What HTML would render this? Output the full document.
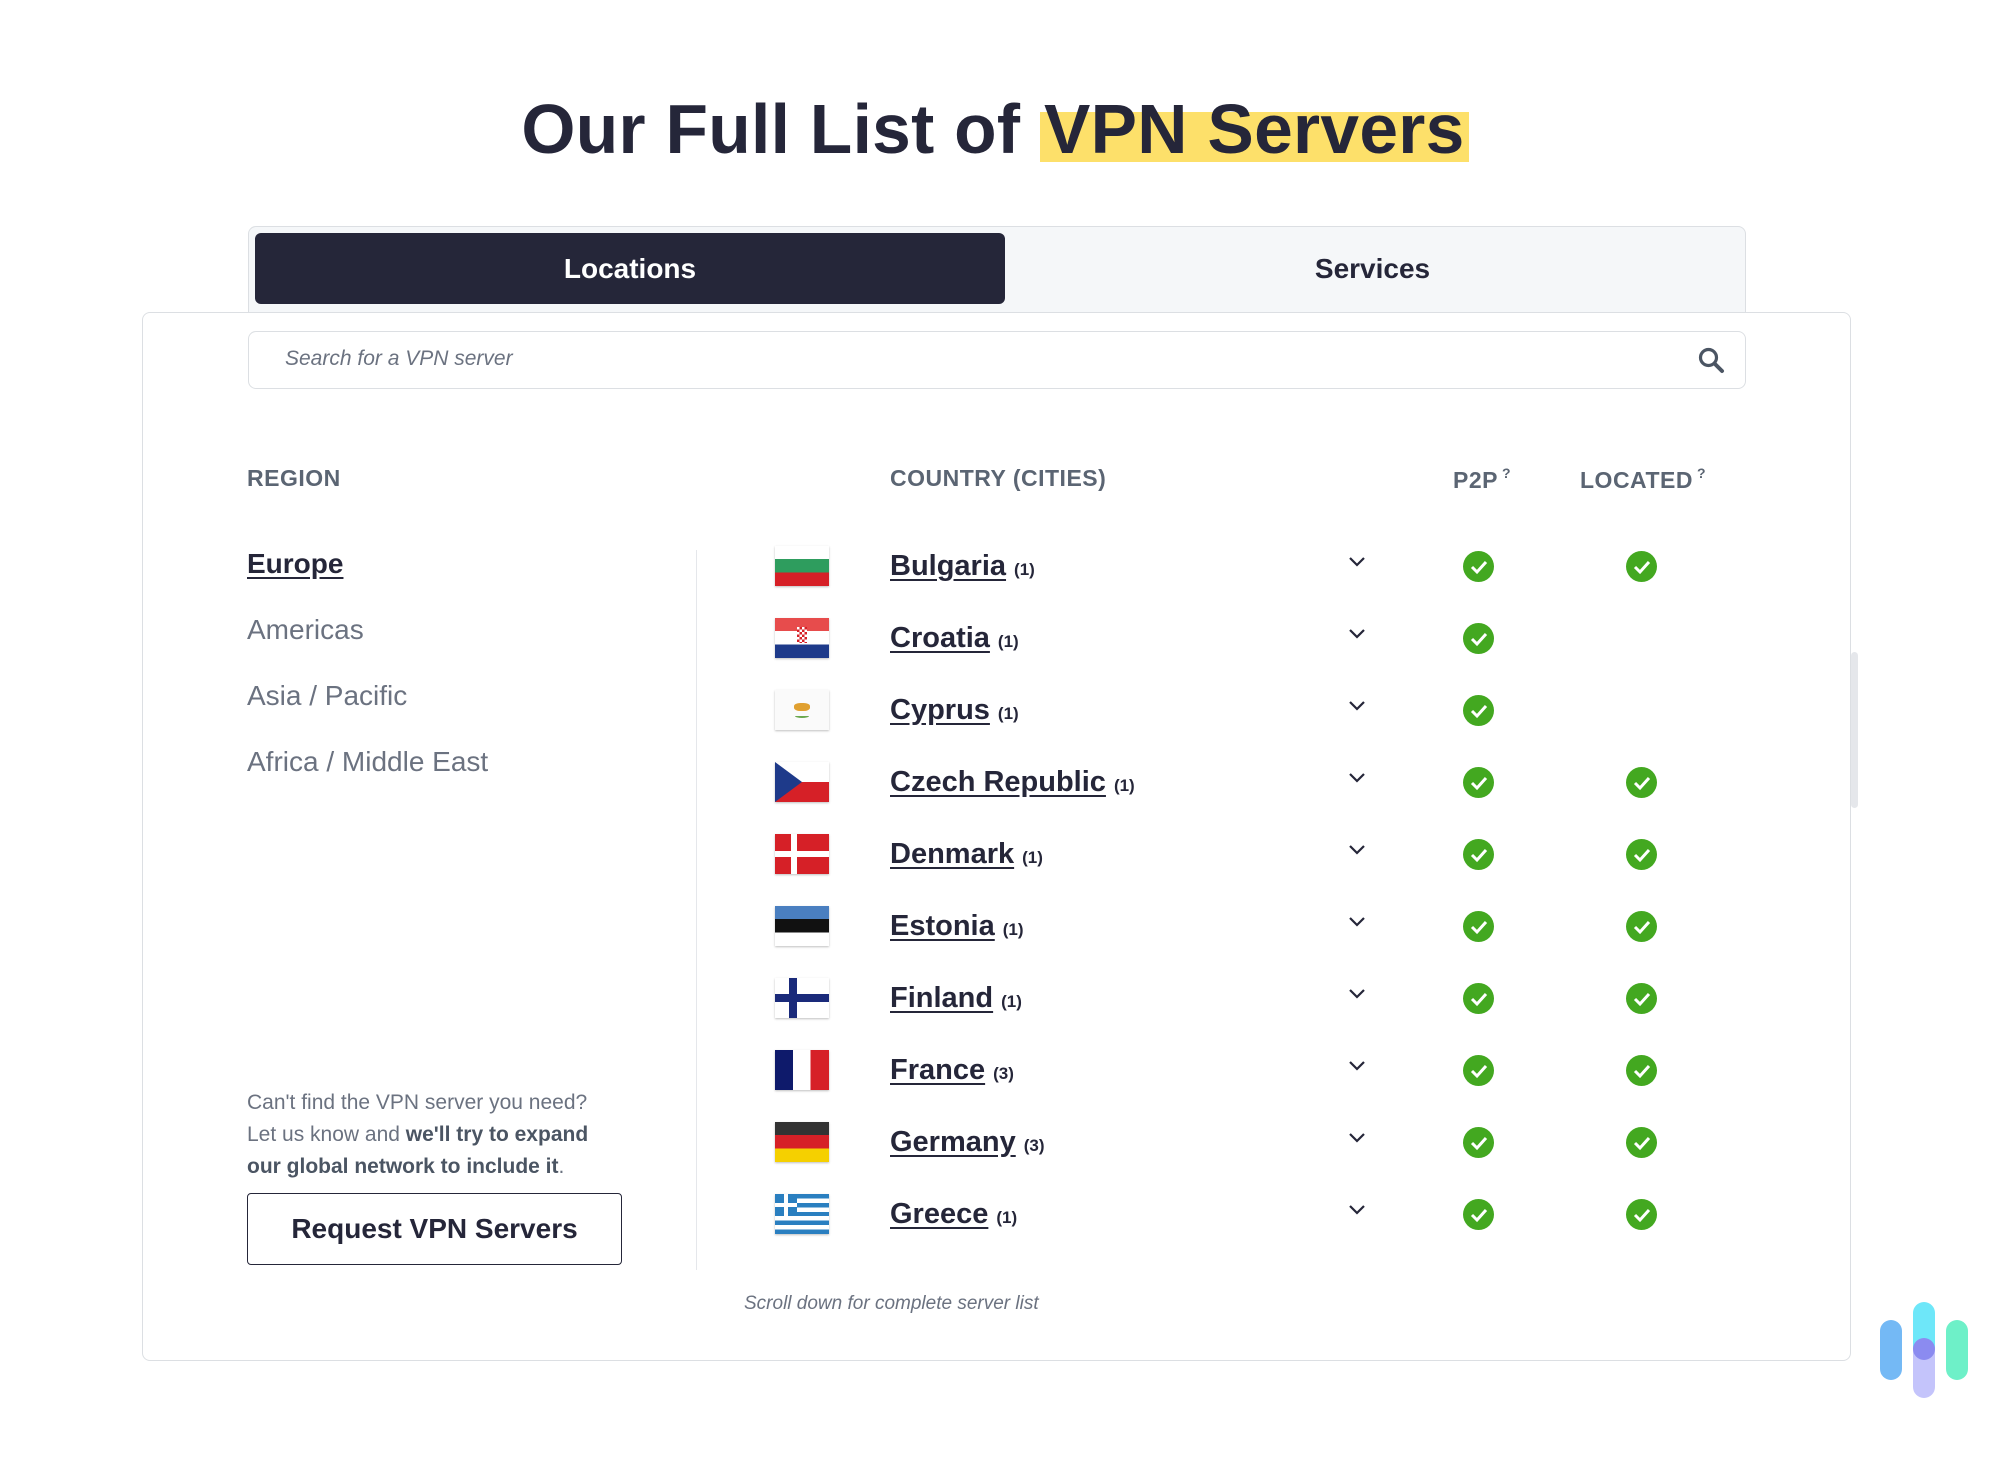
<!DOCTYPE html>
<html><head><meta charset="utf-8"><style>
*{margin:0;padding:0;box-sizing:border-box}
body{width:1995px;height:1465px;background:#fff;font-family:"Liberation Sans",sans-serif;color:#252639;position:relative;overflow:hidden}
.abs{position:absolute}
h1{position:absolute;left:0;width:1990px;top:89px;text-align:center;font-size:69.5px;font-weight:bold;color:#252639;letter-spacing:0.3px}
h1 span{background:linear-gradient(to bottom,transparent 28%,#fde06a 28%,#fde06a 92%,transparent 92%);padding:0 4px}
.tabs{left:248px;top:226px;width:1498px;height:90px;background:#f5f7f9;border:1px solid #dcdfe3;border-radius:8px 8px 0 0}
.loc{left:255px;top:233px;width:750px;height:71px;background:#252639;border-radius:6px;color:#fff;font-size:28px;font-weight:bold;text-align:center;line-height:71px}
.svc{left:1005px;top:233px;width:735px;height:71px;color:#252639;font-size:28px;font-weight:bold;text-align:center;line-height:71px}
.card{left:142px;top:312px;width:1709px;height:1049px;background:#fff;border:1px solid #dcdfe3;border-radius:8px}
.search{left:248px;top:331px;width:1498px;height:58px;border:1px solid #dcdfe3;border-radius:8px;background:#fff}
.ph{left:285px;top:347px;font-size:21px;font-style:italic;color:#6b7280}
.hd{top:465px;font-size:23px;font-weight:bold;color:#5b6573;letter-spacing:0.5px}
.hd sup{font-size:14px;vertical-align:10px;margin-left:4px}
.rg{left:247px;font-size:28px;color:#6b7280}
.row{position:absolute;left:0;width:1995px;height:40px}
.flag{position:absolute;left:775px;width:54px;height:40px;box-shadow:0 1px 2px rgba(0,0,0,.25);overflow:hidden}
.name{position:absolute;left:890px;top:4px;font-size:29px;font-weight:bold;color:#252639;text-decoration:underline;text-underline-offset:4px;white-space:nowrap}
.name small{font-size:17px;text-decoration:none;display:inline-block;margin-left:8px;font-weight:bold}
.chev{position:absolute;left:1348px;top:10px}
.chk{position:absolute;top:5px;width:31px;height:31px;border-radius:50%;background:#43a820}
.chk svg{position:absolute;left:0;top:0}
</style></head><body>
<h1>Our Full List of <span>VPN Servers</span></h1>
<div class="abs tabs"></div>
<div class="abs loc">Locations</div>
<div class="abs svc">Services</div>
<div class="abs card"></div>
<div class="abs search"></div>
<div class="abs ph">Search for a VPN server</div>
<svg class="abs" style="left:1697px;top:346px" width="28" height="28" viewBox="0 0 28 28"><circle cx="11.5" cy="11.5" r="8" fill="none" stroke="#4b5563" stroke-width="3.2"/><line x1="17.5" y1="17.5" x2="25" y2="25" stroke="#4b5563" stroke-width="4" stroke-linecap="round"/></svg>

<div class="abs hd" style="left:247px">REGION</div>
<div class="abs hd" style="left:890px">COUNTRY (CITIES)</div>
<div class="abs hd" style="left:1453px">P2P<sup>?</sup></div>
<div class="abs hd" style="left:1580px">LOCATED<sup>?</sup></div>

<div class="abs rg" style="top:548px;color:#252639;font-weight:bold;text-decoration:underline;text-underline-offset:4px">Europe</div>
<div class="abs rg" style="top:614px">Americas</div>
<div class="abs rg" style="top:680px">Asia / Pacific</div>
<div class="abs rg" style="top:746px">Africa / Middle East</div>

<div class="abs" style="left:696px;top:550px;width:1px;height:720px;background:#e5e7eb"></div>

<div class="abs" style="left:247px;top:1087px;font-size:21px;line-height:32px;color:#6b7280">Can't find the VPN server you need?<br>Let us know and <b style="color:#4b5563">we'll try to expand</b><br><b style="color:#4b5563">our global network to include it</b>.</div>
<div class="abs" style="left:247px;top:1193px;width:375px;height:72px;border:1.5px solid #252639;border-radius:4px;font-size:28px;font-weight:bold;text-align:center;line-height:70px">Request VPN Servers</div>

<div class="abs" style="left:744px;top:1293px;font-size:19px;font-style:italic;color:#6b7280">Scroll down for complete server list</div>
<div class="abs" style="left:1851px;top:652px;width:7px;height:156px;border-radius:4px;background:#e5e7eb"></div>

<div class="row" style="top:546px">
<div class="flag" style="background:linear-gradient(#fff 0 33%,#2e9d5e 33% 66%,#d62027 66%)"></div>
<div class="name">Bulgaria<small>(1)</small></div>
<svg class="chev" width="18" height="12"><path d="M2 2l7 7 7-7" fill="none" stroke="#252639" stroke-width="2.2"/></svg>
<div class="chk" style="left:1470px"><svg width="31" height="31"><path d="M9 16l5 5 9-10" fill="none" stroke="#fff" stroke-width="3"/></svg></div>
<div class="chk" style="left:1634px"><svg width="31" height="31"><path d="M9 16l5 5 9-10" fill="none" stroke="#fff" stroke-width="3"/></svg></div>
</div>
<div class="row" style="top:618px">
<div class="flag" style="background:linear-gradient(#e74c4c 0 33%,#fff 33% 66%,#1e3a8a 66%)"><div style="position:absolute;left:22px;top:9px;width:10px;height:16px;background:repeating-conic-gradient(#d62027 0 25%,#fff 0 50%) 0 0/5px 5px"></div></div>
<div class="name">Croatia<small>(1)</small></div>
<svg class="chev" width="18" height="12"><path d="M2 2l7 7 7-7" fill="none" stroke="#252639" stroke-width="2.2"/></svg>
<div class="chk" style="left:1470px"><svg width="31" height="31"><path d="M9 16l5 5 9-10" fill="none" stroke="#fff" stroke-width="3"/></svg></div>
</div>
<div class="row" style="top:690px">
<div class="flag" style="background:#fafafa"><div style="position:absolute;left:19px;top:13px;width:16px;height:8px;background:#e0a030;border-radius:40%"></div><div style="position:absolute;left:20px;top:24px;width:14px;height:4px;border-bottom:2px solid #6aa84f;border-radius:50%"></div></div>
<div class="name">Cyprus<small>(1)</small></div>
<svg class="chev" width="18" height="12"><path d="M2 2l7 7 7-7" fill="none" stroke="#252639" stroke-width="2.2"/></svg>
<div class="chk" style="left:1470px"><svg width="31" height="31"><path d="M9 16l5 5 9-10" fill="none" stroke="#fff" stroke-width="3"/></svg></div>
</div>
<div class="row" style="top:762px">
<div class="flag"><svg width="54" height="40"><rect width="54" height="20" fill="#fff"/><rect y="20" width="54" height="20" fill="#d62027"/><path d="M0 0L27 20 0 40z" fill="#1e3a8a"/></svg></div>
<div class="name">Czech Republic<small>(1)</small></div>
<svg class="chev" width="18" height="12"><path d="M2 2l7 7 7-7" fill="none" stroke="#252639" stroke-width="2.2"/></svg>
<div class="chk" style="left:1470px"><svg width="31" height="31"><path d="M9 16l5 5 9-10" fill="none" stroke="#fff" stroke-width="3"/></svg></div>
<div class="chk" style="left:1634px"><svg width="31" height="31"><path d="M9 16l5 5 9-10" fill="none" stroke="#fff" stroke-width="3"/></svg></div>
</div>
<div class="row" style="top:834px">
<div class="flag"><svg width="54" height="40"><rect width="54" height="40" fill="#d62027"/><rect x="16" width="6" height="40" fill="#fff"/><rect y="17" width="54" height="6" fill="#fff"/></svg></div>
<div class="name">Denmark<small>(1)</small></div>
<svg class="chev" width="18" height="12"><path d="M2 2l7 7 7-7" fill="none" stroke="#252639" stroke-width="2.2"/></svg>
<div class="chk" style="left:1470px"><svg width="31" height="31"><path d="M9 16l5 5 9-10" fill="none" stroke="#fff" stroke-width="3"/></svg></div>
<div class="chk" style="left:1634px"><svg width="31" height="31"><path d="M9 16l5 5 9-10" fill="none" stroke="#fff" stroke-width="3"/></svg></div>
</div>
<div class="row" style="top:906px">
<div class="flag" style="background:linear-gradient(#4a7fc0 0 33%,#111 33% 66%,#fff 66%)"></div>
<div class="name">Estonia<small>(1)</small></div>
<svg class="chev" width="18" height="12"><path d="M2 2l7 7 7-7" fill="none" stroke="#252639" stroke-width="2.2"/></svg>
<div class="chk" style="left:1470px"><svg width="31" height="31"><path d="M9 16l5 5 9-10" fill="none" stroke="#fff" stroke-width="3"/></svg></div>
<div class="chk" style="left:1634px"><svg width="31" height="31"><path d="M9 16l5 5 9-10" fill="none" stroke="#fff" stroke-width="3"/></svg></div>
</div>
<div class="row" style="top:978px">
<div class="flag"><svg width="54" height="40"><rect width="54" height="40" fill="#fff"/><rect x="14" width="8" height="40" fill="#1a2a7a"/><rect y="16" width="54" height="8" fill="#1a2a7a"/></svg></div>
<div class="name">Finland<small>(1)</small></div>
<svg class="chev" width="18" height="12"><path d="M2 2l7 7 7-7" fill="none" stroke="#252639" stroke-width="2.2"/></svg>
<div class="chk" style="left:1470px"><svg width="31" height="31"><path d="M9 16l5 5 9-10" fill="none" stroke="#fff" stroke-width="3"/></svg></div>
<div class="chk" style="left:1634px"><svg width="31" height="31"><path d="M9 16l5 5 9-10" fill="none" stroke="#fff" stroke-width="3"/></svg></div>
</div>
<div class="row" style="top:1050px">
<div class="flag" style="background:linear-gradient(90deg,#0e1a6b 0 33%,#fff 33% 66%,#d62027 66%)"></div>
<div class="name">France<small>(3)</small></div>
<svg class="chev" width="18" height="12"><path d="M2 2l7 7 7-7" fill="none" stroke="#252639" stroke-width="2.2"/></svg>
<div class="chk" style="left:1470px"><svg width="31" height="31"><path d="M9 16l5 5 9-10" fill="none" stroke="#fff" stroke-width="3"/></svg></div>
<div class="chk" style="left:1634px"><svg width="31" height="31"><path d="M9 16l5 5 9-10" fill="none" stroke="#fff" stroke-width="3"/></svg></div>
</div>
<div class="row" style="top:1122px">
<div class="flag" style="background:linear-gradient(#333 0 33%,#d62027 33% 66%,#f5d000 66%)"></div>
<div class="name">Germany<small>(3)</small></div>
<svg class="chev" width="18" height="12"><path d="M2 2l7 7 7-7" fill="none" stroke="#252639" stroke-width="2.2"/></svg>
<div class="chk" style="left:1470px"><svg width="31" height="31"><path d="M9 16l5 5 9-10" fill="none" stroke="#fff" stroke-width="3"/></svg></div>
<div class="chk" style="left:1634px"><svg width="31" height="31"><path d="M9 16l5 5 9-10" fill="none" stroke="#fff" stroke-width="3"/></svg></div>
</div>
<div class="row" style="top:1194px">
<div class="flag" style="background:repeating-linear-gradient(#2a7fc0 0 4.45px,#fff 4.45px 8.9px)"><div style="position:absolute;left:0;top:0;width:22px;height:22px;background:#2a7fc0"></div><div style="position:absolute;left:9px;top:0;width:4px;height:22px;background:#fff"></div><div style="position:absolute;left:0;top:9px;width:22px;height:4px;background:#fff"></div></div>
<div class="name">Greece<small>(1)</small></div>
<svg class="chev" width="18" height="12"><path d="M2 2l7 7 7-7" fill="none" stroke="#252639" stroke-width="2.2"/></svg>
<div class="chk" style="left:1470px"><svg width="31" height="31"><path d="M9 16l5 5 9-10" fill="none" stroke="#fff" stroke-width="3"/></svg></div>
<div class="chk" style="left:1634px"><svg width="31" height="31"><path d="M9 16l5 5 9-10" fill="none" stroke="#fff" stroke-width="3"/></svg></div>
</div>
<style>.row .chk[style*="1470"]{left:1463px!important}.row .chk[style*="1634"]{left:1626px!important}</style>

<div class="abs" style="left:1880px;top:1320px;width:22px;height:60px;border-radius:11px;background:#74b9f5"></div>
<div class="abs" style="left:1913px;top:1302px;width:22px;height:60px;border-radius:11px;background:#6ee7f9"></div>
<div class="abs" style="left:1913px;top:1340px;width:22px;height:58px;border-radius:11px;background:#c4c4fb"></div>
<div class="abs" style="left:1913px;top:1338px;width:22px;height:22px;border-radius:11px;background:#8b8bf0"></div>
<div class="abs" style="left:1946px;top:1320px;width:22px;height:60px;border-radius:11px;background:#6ef0c8"></div>
</body></html>
